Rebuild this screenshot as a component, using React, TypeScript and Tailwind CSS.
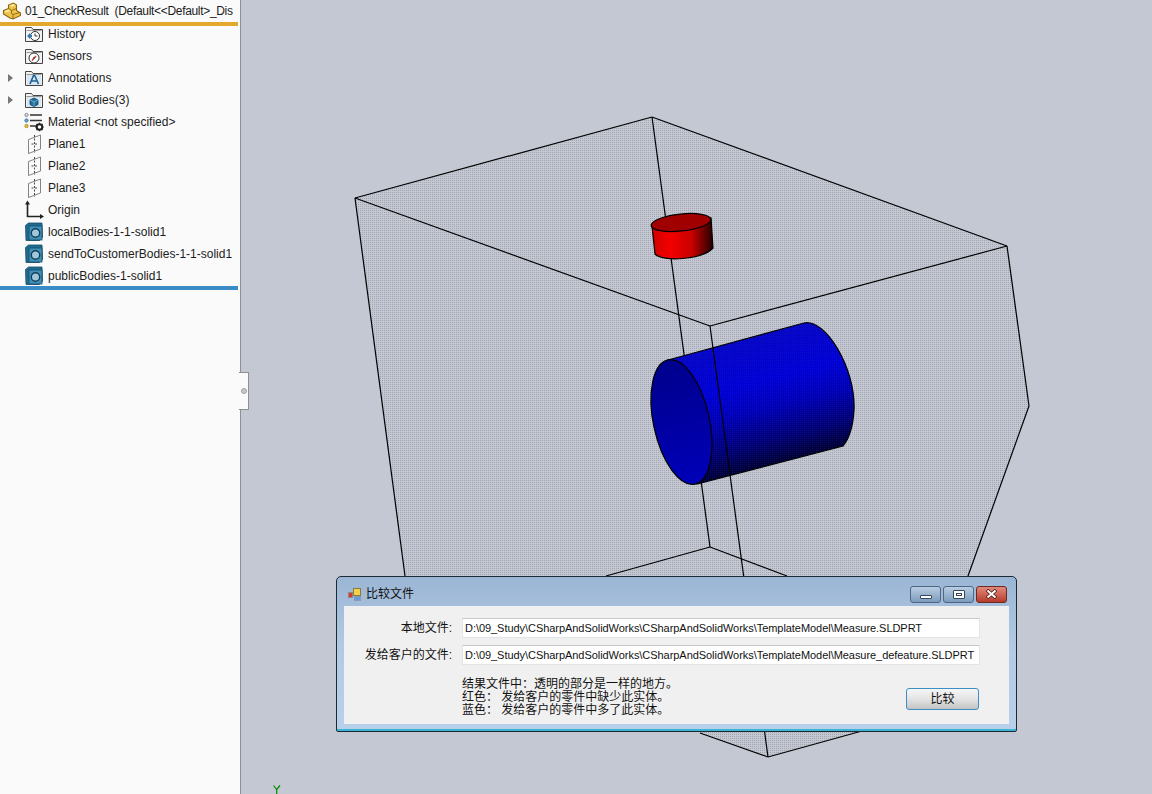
import type { ReactNode } from "react";

const lines = [
  "355,198 652,117",
  "652,117 1007,246",
  "355,198 710,326",
  "710,326 1007,246",
  "1007,246 1029,406",
  "1029,406 968,576",
  "968,576 862,731",
  "355,198 405,576",
  "652,117 710,547",
  "710,547 606,576",
  "710,547 787,576",
  "768,757 862,731",
  "768,757 700,733",
];

function Folder({ children }: { children: ReactNode }) {
  return (
    <svg width="20" height="20" viewBox="0 0 20 20" className="shrink-0">
      <path d="M1.500 3.500h6l1.500 2h9.500v12h-17z" fill="#f2f2f2" stroke="#444" />
      <path d="M2.500 6.500h15" stroke="#999" />
      {children}
    </svg>
  );
}

function HistoryIcon() {
  return (
    <Folder>
      <circle cx="11" cy="12" r="4.500" fill="#fff" stroke="#333" />
      <path d="M11 9.500V12h2.500" fill="none" stroke="#333" />
      <path d="M3 12l3-3v2h2v2H6v2z" fill="#2f79b5" />
    </Folder>
  );
}

function SensorIcon() {
  return (
    <Folder>
      <circle cx="10" cy="12" r="5" fill="#fff" stroke="#333" />
      <path d="M8 14.500l4-4.500" stroke="#d0342c" strokeWidth="1.500" />
      <circle cx="10" cy="12" r="1" fill="#555" />
    </Folder>
  );
}

function AnnotationIcon() {
  return (
    <Folder>
      <rect x="3" y="7" width="14" height="10" fill="#d6e6f2" />
      <path d="M6 16l3.500-8.500h1.200L14.500 16M7.500 13h5" fill="none" stroke="#1f5f94" strokeWidth="1.600" />
    </Folder>
  );
}

function BodiesIcon() {
  return (
    <Folder>
      <rect x="3" y="7" width="14" height="10" fill="#d6e6f2" />
      <path d="M10 8l4 2v4.500l-4 2-4-2V10z" fill="#1f6f9c" stroke="#0e3f5e" strokeWidth="0.800" />
      <path d="M6 10l4 2 4-2M10 12v4" fill="none" stroke="#8fc3de" strokeWidth="0.700" />
    </Folder>
  );
}

function MaterialIcon() {
  return (
    <svg width="20" height="20" viewBox="0 0 20 20" className="shrink-0">
      <circle cx="2.500" cy="3" r="1.700" fill="#cfd8e0" stroke="#777" strokeWidth="0.700" />
      <circle cx="2.500" cy="8.500" r="1.700" fill="#6aa5d8" stroke="#35688f" strokeWidth="0.700" />
      <circle cx="2.500" cy="14" r="1.700" fill="#f0c030" stroke="#a07a10" strokeWidth="0.700" />
      <path d="M6 3h12M6 8.500h12M6 14h6" stroke="#333" strokeWidth="1.500" />
      <circle cx="15.500" cy="15" r="2.800" fill="none" stroke="#222" strokeWidth="2" />
      <path d="M15.500 10.800v1.500M15.500 17.700v1.500M11.300 15h1.500M18.200 15h1.500M12.500 12l1 1M17.500 17l1 1M18.500 12l-1 1M13.500 17l-1 1" stroke="#222" strokeWidth="1.200" />
    </svg>
  );
}

function PlaneIcon() {
  return (
    <svg width="20" height="20" viewBox="0 0 20 20" className="shrink-0">
      <path d="M4.500 5.500l12-4.500v14l-12 4.500z" fill="none" stroke="#666" strokeWidth="0.800" />
      <path d="M10.500 1v18M7.500 10h6" fill="none" stroke="#333" strokeWidth="0.900" strokeDasharray="2 1.500" />
    </svg>
  );
}

function OriginIcon() {
  return (
    <svg width="20" height="20" viewBox="0 0 20 20" className="shrink-0">
      <path d="M3.500 3v13.500h14" fill="none" stroke="#222" strokeWidth="1.600" />
      <path d="M3.500 0.500l-2.500 4h5zM20 16.500l-4-2.500v5z" fill="#222" />
    </svg>
  );
}

function SolidIcon() {
  return (
    <svg width="20" height="20" viewBox="0 0 20 20" className="shrink-0">
      <path d="M1.500 3.500l3-2.500h13.500l.5 14.500-3 3H2z" fill="#1f6c90" stroke="#174c68" strokeWidth="0.800" />
      <rect x="5" y="4" width="13" height="14" fill="#3f8fb6" stroke="#174c68" strokeWidth="0.800" />
      <circle cx="11.500" cy="11" r="4.200" fill="#9fc7dc" stroke="#123f58" strokeWidth="1.400" />
    </svg>
  );
}

const rows = [
  { label: "History", icon: <HistoryIcon /> },
  { label: "Sensors", icon: <SensorIcon /> },
  { label: "Annotations", icon: <AnnotationIcon />, arrow: true },
  { label: "Solid Bodies(3)", icon: <BodiesIcon />, arrow: true },
  { label: "Material <not specified>", icon: <MaterialIcon /> },
  { label: "Plane1", icon: <PlaneIcon /> },
  { label: "Plane2", icon: <PlaneIcon /> },
  { label: "Plane3", icon: <PlaneIcon /> },
  { label: "Origin", icon: <OriginIcon /> },
  { label: "localBodies-1-1-solid1", icon: <SolidIcon /> },
  { label: "sendToCustomerBodies-1-1-solid1", icon: <SolidIcon /> },
  { label: "publicBodies-1-solid1", icon: <SolidIcon /> },
];

function Scene() {
  return (
    <svg viewBox="241 0 911 794" width="911" height="794" className="block">
      <defs>
        <pattern id="dots" width="2" height="2" patternUnits="userSpaceOnUse">
          <rect width="1" height="1" fill="#a2a5b0" />
        </pattern>
        <pattern id="blueDots" width="2" height="2" patternUnits="userSpaceOnUse">
          <rect width="1" height="1" fill="#3030f0" fillOpacity="0.18" />
        </pattern>
        <linearGradient id="blueSide" gradientUnits="userSpaceOnUse" x1="735" y1="340" x2="770" y2="472">
          <stop offset="0" stopColor="#0606c4" />
          <stop offset="0.35" stopColor="#0000d4" />
          <stop offset="0.55" stopColor="#0000b4" />
          <stop offset="0.78" stopColor="#000070" />
          <stop offset="1" stopColor="#00001c" />
        </linearGradient>
        <linearGradient id="blueEnd" x1="0" y1="0" x2="1" y2="0">
          <stop offset="0" stopColor="#00008c" />
          <stop offset="1" stopColor="#0000b8" />
        </linearGradient>
        <linearGradient id="redSide" x1="0" y1="0" x2="1" y2="0">
          <stop offset="0" stopColor="#d00000" />
          <stop offset="0.3" stopColor="#f40000" />
          <stop offset="0.65" stopColor="#c80000" />
          <stop offset="1" stopColor="#240000" />
        </linearGradient>
      </defs>

      <polygon points="355,198 652,117 1007,246 1029,406 968,576 862,731 768,757 700,733 405,576" fill="url(#dots)" />

      <g stroke="#000" strokeWidth="1.200" fill="none">
        {lines.map((l) => (
          <polyline key={l} points={l} />
        ))}
      </g>

      {/* red cylinder */}
      <path d="M652 226L655 254C662 262 702 260 713 248L711 218Z" fill="url(#redSide)" stroke="#000" strokeWidth="1.200" />
      <ellipse cx="681" cy="222.500" rx="30" ry="8.500" transform="rotate(-6 681 222.500)" fill="#a00000" stroke="#000" strokeWidth="1.200" />

      {/* blue cylinder */}
      <path d="M668 360L804 323C825 318 856 368 854 410C853 428 848 440 843 446L697 484Z" fill="url(#blueSide)" stroke="#000" strokeWidth="1.200" />
      <path d="M668 360L804 323C825 318 856 368 854 410C853 428 848 440 843 446L697 484Z" fill="url(#blueDots)" />
      <ellipse cx="681.500" cy="422" rx="63.500" ry="28" transform="rotate(77.700 681.500 422)" fill="url(#blueEnd)" stroke="#000" strokeWidth="1.200" />

      <polyline points="710,326 768,757" stroke="#000" strokeWidth="1.200" fill="none" />

      {/* Y axis marker */}
      <path d="M273.500 785.500L276.700 789.500L280 785.500M276.700 789.500V794" fill="none" stroke="#008a00" strokeWidth="1.200" />
    </svg>
  );
}

function WinButton({ children, className }: { children: ReactNode; className: string }) {
  return (
    <div className={`flex h-[17px] w-[31px] items-center justify-center rounded-[3px] border border-[#4c6684] ${className}`}>
      {children}
    </div>
  );
}

function Dialog() {
  return (
    <div className="absolute left-[95px] top-[576px] flex h-[156px] w-[681px] flex-col rounded-t-[5px] rounded-b-[2px] border border-[#1c2a33] bg-gradient-to-b from-[#9bb6d4] via-[#b3cbe6] to-[#b8d0ea] shadow-[inset_0_-2px_0_#3db4d6]">
      <div className="flex h-[29px] shrink-0 items-center pl-[11px] pr-[9px] pt-[5px]">
        <svg width="13" height="13" viewBox="0 0 13 13" className="shrink-0">
          <rect x="0.500" y="4.500" width="4" height="5" fill="#d83a2c" stroke="#8a8a8a" />
          <rect x="5.500" y="0.500" width="7" height="7" fill="#f4cf4a" stroke="#8a7a40" />
          <rect x="6.500" y="8.500" width="6" height="4" fill="#6a9ade" stroke="#8a9ab0" />
        </svg>
        <span className="ml-[5px] text-[12px] text-[#111]">比较文件</span>
        <div className="ml-auto flex gap-[2px]">
          <WinButton className="bg-gradient-to-b from-[#b9cde2] to-[#7d9cbd]">
            <div className="mt-[5px] h-[4px] w-[12px] rounded-[1px] border border-[#33465c] bg-white" />
          </WinButton>
          <WinButton className="bg-gradient-to-b from-[#b9cde2] to-[#7d9cbd]">
            <div className="flex h-[9px] w-[12px] items-center justify-center rounded-[1px] border border-[#33465c] bg-white">
              <div className="h-[3px] w-[6px] border border-[#33465c]" />
            </div>
          </WinButton>
          <WinButton className="border-[#6a2a22] bg-gradient-to-b from-[#e0897c] to-[#b63a2a]">
            <svg width="13" height="10" viewBox="0 0 13 10">
              <path d="M2 1l9 8M11 1l-9 8" stroke="#4a1a14" strokeWidth="3.400" />
              <path d="M2.500 1.500l8 7M10.500 1.500l-8 7" stroke="#fff" strokeWidth="2" />
            </svg>
          </WinButton>
        </div>
      </div>
      <div className="mx-[7px] flex h-[118px] flex-col bg-[#f0f0f0] pl-[5px] text-[12px] text-[#111]">
        <div className="mt-[12px] flex h-[20px] items-center">
          <span className="w-[103px] text-right">本地文件:</span>
          <input
            readOnly
            value="D:\09_Study\CSharpAndSolidWorks\CSharpAndSolidWorks\TemplateModel\Measure.SLDPRT"
            className="ml-[10px] h-[20px] w-[518px] rounded-[1px] border border-[#e2e3e6] border-t-[#c8c9cc] bg-white pl-[2px] text-[11px] tracking-[-0.05px] outline-none"
          />
        </div>
        <div className="mt-[7px] flex h-[20px] items-center">
          <span className="w-[103px] whitespace-nowrap text-right">发给客户的文件:</span>
          <input
            readOnly
            value="D:\09_Study\CSharpAndSolidWorks\CSharpAndSolidWorks\TemplateModel\Measure_defeature.SLDPRT"
            className="ml-[10px] h-[20px] w-[518px] rounded-[1px] border border-[#e2e3e6] border-t-[#c8c9cc] bg-white pl-[2px] text-[11px] tracking-[-0.05px] outline-none"
          />
        </div>
        <div className="mt-[13px] flex items-start">
          <div className="ml-[113px] whitespace-pre text-[12px] leading-[13px]">
            <div>结果文件中：透明的部分是一样的地方。</div>
            <div>红色： 发给客户的零件中缺少此实体。</div>
            <div>蓝色： 发给客户的零件中多了此实体。</div>
          </div>
          <button className="ml-auto mr-[30px] mt-[10px] h-[22px] w-[73px] rounded-[3px] border border-[#3a8fc4] bg-gradient-to-b from-[#f6f6f6] via-[#e4e4e4] to-[#c4c4c4] text-[12px] text-[#111]">
            比较
          </button>
        </div>
      </div>
    </div>
  );
}

export default function App() {
  return (
    <div className="flex h-[794px] w-[1152px] overflow-hidden bg-[#c4c8d3] [font-family:'Liberation_Sans','Noto_Sans_CJK_SC',sans-serif]">
      {/* feature tree */}
      <aside className="relative h-full w-[241px] shrink-0 border-r border-[#8f8f8f] bg-[#fafafa] text-[12px] text-[#1c1c1c]">
        <div className="flex h-[22px] w-[238px] items-center whitespace-pre">
          <svg width="20" height="18" viewBox="0 0 20 18" className="ml-[2px] mr-[3px] shrink-0">
            <path d="M1.500 8.500l5-2V3l5-2 3 2v5.500l4 2.500v2.500L11 17l-3-1-6.500-4z" fill="#efc24a" stroke="#8a6510" strokeWidth="1.100" />
            <path d="M6.500 6.500l3 2v3l1.500 1v4M11 12.500l7-2M9.500 8.500l5-2" fill="none" stroke="#8a6510" strokeWidth="0.900" />
            <path d="M2.500 9l4-1.500 2 1.500-4 1.500zM7.500 3.500l4-1.500 2 1.200-4 1.600z" fill="#fbe9a0" />
          </svg>
          <span className="tracking-[-0.32px]">01_CheckResult  (Default&lt;&lt;Default&gt;_Dis</span>
        </div>
        <div className="relative z-10 h-[4px] w-[238px] bg-[#e5a82e]" />
        <ul className="-mt-[3px]">
          {rows.map((row) => (
            <li key={row.label} className="relative flex h-[22px] items-center pl-[24px]">
              {row.arrow && (
                <span className="absolute left-[8px] top-[7px] h-0 w-0 border-y-[4px] border-l-[5px] border-y-transparent border-l-[#777]" />
              )}
              {row.icon}
              <span className="ml-[4px] whitespace-nowrap">{row.label}</span>
            </li>
          ))}
        </ul>
        <div className="relative z-10 -mt-[1px] h-[4px] w-[238px] bg-[#3a8cc6]" />
        {/* splitter grip */}
        <div className="absolute left-[239px] top-[372px] flex h-[38px] w-[10px] items-center justify-center border border-l-0 border-[#8f8f8f] bg-[#fafafa]">
          <span className="h-[6px] w-[6px] rounded-full border border-[#a0a0a0] bg-[#c8c8c8]" />
        </div>
      </aside>

      {/* graphics area */}
      <main className="relative h-full flex-1">
        <Scene />
        <Dialog />
      </main>
    </div>
  );
}
